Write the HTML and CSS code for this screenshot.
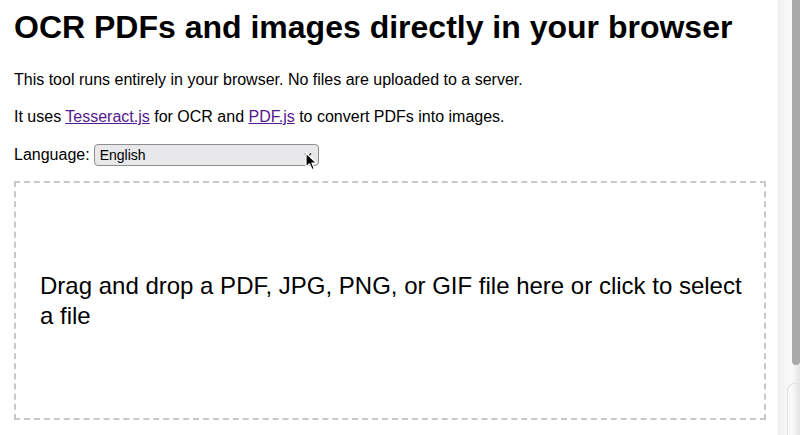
FILE: index.html
```html
<!DOCTYPE html>
<html lang="en">
<head>
  <meta charset="UTF-8" />
  <title>OCR PDFs and images directly in your browser</title>
  <link rel="stylesheet" href="styles.css">
</head>
<body>
  <div class="page">
    <h1>OCR PDFs and images directly in your browser</h1>
    <p>This tool runs entirely in your browser. No files are uploaded to a server.</p>
    <p>It uses <a href="#">Tesseract.js</a> for OCR and <a href="#">PDF.js</a> to convert PDFs into images.</p>

    <div class="language">
      <label for="language">Language:</label>
      <div class="select-wrap">
        <select id="language">
          <option>English</option>
        </select>
        <svg class="chevron" width="10" height="10" viewBox="0 0 10 10">
          <path d="M2 3.5 L5 6.5 L8 3.5" fill="none" stroke="#333" stroke-width="1.4" />
        </svg>
        <svg class="cursor" width="14" height="20" viewBox="0 0 14 20">
          <path d="M1 1 L1 15 L4.5 11.8 L7 17.5 L9.3 16.5 L6.9 11 L11.5 11 Z" fill="#000" stroke="#fff" stroke-width="1.2" stroke-linejoin="round" />
        </svg>
      </div>
    </div>

    <div class="dropzone">
      Drag and drop a PDF, JPG, PNG, or GIF file here or click to select a file
    </div>
  </div>

  <div class="scrollbar">
    <div class="thumb"></div>
    <div class="corner"></div>
  </div>
</body>
</html>
```

FILE: styles.css
```css
html, body {
  height: 100%;
}
body {
  margin: 0;
  display: flex;
  font-family: "Liberation Sans", Arial, Helvetica, sans-serif;
  background-color: #fff;
  color: #000;
  overflow: hidden;
}
.page {
  flex: 1;
  padding: 0 12px 0 14px;
}
h1 {
  font-size: 32px;
  margin: 8px 0 24px;
  line-height: 38px;
}
p {
  font-size: 16px;
  margin: 0 0 18px;
  line-height: 19px;
}
a {
  color: #551a8b;
}
.language {
  display: flex;
  align-items: center;
  gap: 4px;
  font-size: 16px;
  margin-bottom: 15px;
}
.select-wrap {
  position: relative;
}
select {
  appearance: none;
  -webkit-appearance: none;
  width: 225px;
  height: 22px;
  padding: 0 0 0 5px;
  font-family: "Liberation Sans", Arial, sans-serif;
  font-size: 14px;
  color: #000;
  background-color: #e8e8ea;
  border: 1px solid #8e8e8e;
  border-radius: 4px;
}
.chevron {
  position: absolute;
  right: 6px;
  top: 6px;
}
.cursor {
  position: absolute;
  left: 211px;
  top: 8px;
}
.dropzone {
  height: 235px;
  border: 2px dashed #c8c8c8;
  padding: 0 15px 0 24px;
  display: flex;
  align-items: center;
  font-size: 24px;
  line-height: 30px;
}
.scrollbar {
  width: 21px;
  display: flex;
  flex-direction: column;
  background: linear-gradient(to right, #f2f2f2, #fafafa 60%, #e4e4e4);
  border-left: 1px solid #ececec;
}
.thumb {
  height: 365px;
  margin-left: 13px;
  background-color: #a9a9a9;
  border-radius: 0 0 4px 4px;
}
.corner {
  margin: 18px 0 0 8px;
  flex: 1;
  border-left: 1px solid #e2e2e2;
  border-top: 1px solid #e2e2e2;
  border-radius: 8px 0 0 0;
}
```
